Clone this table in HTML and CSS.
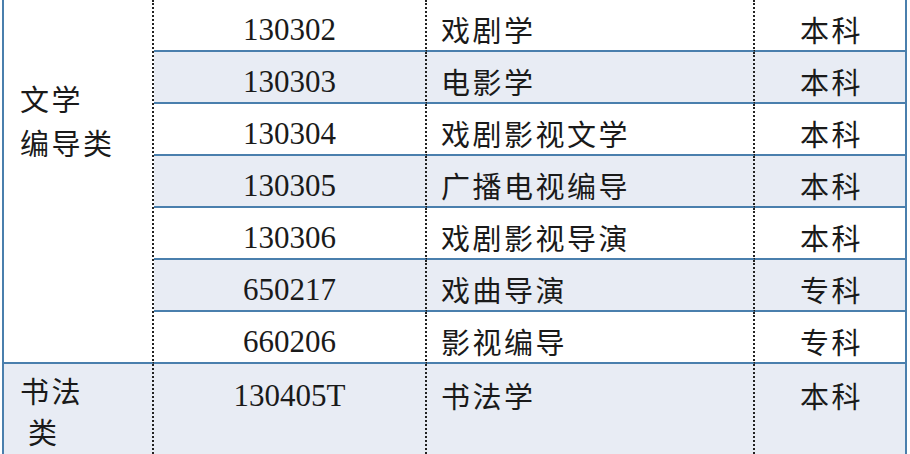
FILE: index.html
```html
<!DOCTYPE html>
<html lang="zh-CN">
<head>
<meta charset="utf-8">
<title>专业目录</title>
<link rel="stylesheet" href="styles.css">
</head>
<body>
<div class="majors">
  <div class="cell group group-first">文学<br>编导类</div>
  <div class="cell code">130302</div>
  <div class="cell name">戏剧学</div>
  <div class="cell level">本科</div>

  <div class="cell code shade">130303</div>
  <div class="cell name shade">电影学</div>
  <div class="cell level shade">本科</div>

  <div class="cell code">130304</div>
  <div class="cell name">戏剧影视文学</div>
  <div class="cell level">本科</div>

  <div class="cell code shade">130305</div>
  <div class="cell name shade">广播电视编导</div>
  <div class="cell level shade">本科</div>

  <div class="cell code">130306</div>
  <div class="cell name">戏剧影视导演</div>
  <div class="cell level">本科</div>

  <div class="cell code shade">650217</div>
  <div class="cell name shade">戏曲导演</div>
  <div class="cell level shade">专科</div>

  <div class="cell code">660206</div>
  <div class="cell name">影视编导</div>
  <div class="cell level">专科</div>

  <div class="cell group group-last shade"><span class="line">书法</span><span class="line line-second">类</span></div>
  <div class="cell code last shade">130405T</div>
  <div class="cell name last shade">书法学</div>
  <div class="cell level last shade">本科</div>
</div>
</body>
</html>
```

FILE: styles.css
```css
html, body {
  margin: 0;
  padding: 0;
  background: #ffffff;
}

body {
  width: 910px;
  height: 454px;
  overflow: hidden;
  color: #1a1a1a;
  font-family: "Noto Sans CJK SC", "Noto Sans", sans-serif;
}

.majors {
  margin-left: 2px;
  display: grid;
  grid-template-columns: 152px 273px 328px 152px;
  grid-template-rows: repeat(7, 52px) 90px;
}

.cell {
  box-sizing: border-box;
  border-bottom: 2px solid #4a7fad;
  border-right: 2px dotted #222222;
  padding-top: 15px;
  line-height: 28px;
  font-size: 29px;
  letter-spacing: 2.5px;
  white-space: nowrap;
}

.shade {
  background: #e8ecf4;
}

.group {
  grid-column: 1;
  border-left: 2px solid #4a7fad;
  padding-left: 16px;
}

.group-first {
  grid-row: 1 / span 7;
  padding-top: 76px;
  line-height: 44px;
}

.group-last {
  grid-row: 8;
  border-bottom: none;
  padding-top: 12px;
  line-height: 28px;
}

.line {
  display: block;
}

.line-second {
  margin-top: 13px;
  padding-left: 8px;
}

.code {
  grid-column: 2;
  text-align: center;
  font-family: "Liberation Serif", "Noto Sans CJK SC", serif;
  font-size: 31px;
  letter-spacing: 0;
  padding-top: 16px;
}

.name {
  grid-column: 3;
  padding-left: 14px;
}

.level {
  grid-column: 4;
  text-align: center;
  padding-left: 3px;
  border-right: 2px solid #4a7fad;
}

.last {
  border-bottom: none;
  padding-top: 17px;
}

.code.last {
  padding-top: 18px;
}
```
